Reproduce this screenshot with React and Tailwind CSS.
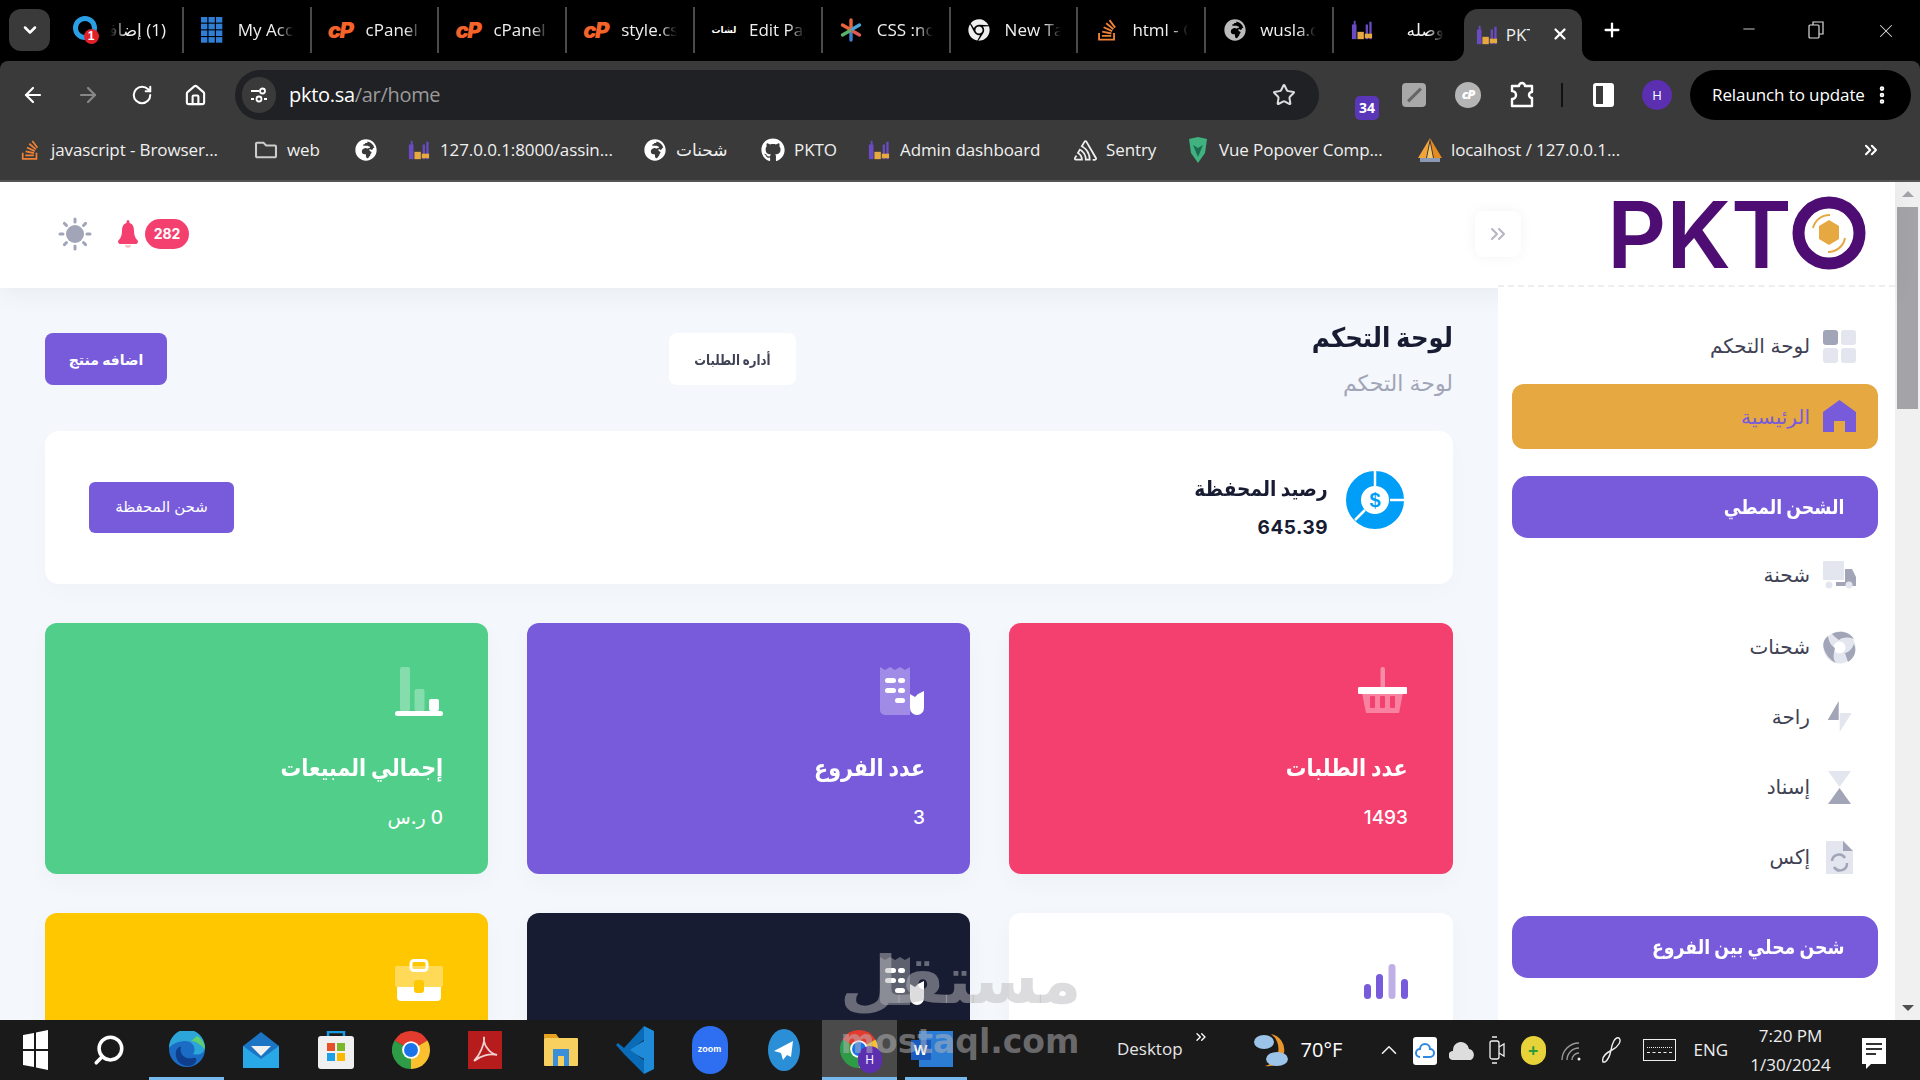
import React from 'react';
import { FaGithub, FaChrome, FaGlobeAfrica, FaStackOverflow, FaRegFolder } from 'react-icons/fa';
import { SiSentry } from 'react-icons/si';
import { ArrowLeft, ArrowRight, RotateCw, Home, Star, X, Plus, Minus, ChevronDown, ChevronsRight, ChevronUp, Search, EllipsisVertical } from 'lucide-react';

const ui = "font-['Open_Sans','Noto_Sans','DejaVu_Sans',sans-serif]";
const ar = "font-['Inter','DejaVu_Sans',sans-serif]";

const Fav = ({ s = 22 }) => (
  <svg width={s} height={s} viewBox="0 0 24 24"><rect x="1" y="6" width="5" height="16" fill="#6a4bc4"/><rect x="3" y="2" width="2" height="5" fill="#6a4bc4"/><rect x="7" y="14" width="7" height="8" fill="#e6a840"/><rect x="16" y="6" width="2.5" height="16" fill="#6a4bc4"/><rect x="20" y="3" width="2.5" height="19" fill="#6a4bc4"/><rect x="15" y="16" width="8" height="5" fill="#e6a840"/></svg>
);
const ChromeIcon = ({ s = 36 }) => (
  <svg width={s} height={s} viewBox="0 0 24 24"><path d="M12 12L1.6 6A12 12 0 0 1 22.39 6Z" fill="#e33b2e"/><path d="M12 12L22.39 6A12 12 0 0 1 12 24Z" fill="#fbc02d"/><path d="M12 12L12 24A12 12 0 0 1 1.6 6Z" fill="#2e9b47"/><circle cx="12" cy="12" r="5.6" fill="#fff"/><circle cx="12" cy="12" r="4.4" fill="#1a73e8"/></svg>
);
const Star6 = () => (
  <svg width="24" height="24" viewBox="0 0 24 24" strokeWidth="3.4" strokeLinecap="round"><path d="M12 2V10" stroke="#e8643c"/><path d="M12 14V22" stroke="#3f7fd0"/><path d="M3.5 7L10.5 11" stroke="#e8643c"/><path d="M13.5 13L20.5 17" stroke="#e05a50"/><path d="M20.5 7L13.5 11" stroke="#4aa3d8"/><path d="M10.5 13L3.5 17" stroke="#5bb36a"/></svg>
);
const Counter = () => (
  <div className="relative w-[24px] h-[28px]">
    <svg width="24" height="28" viewBox="0 0 24 28"><circle cx="12" cy="12" r="9.5" fill="none" stroke="#2a9fe6" strokeWidth="5"/></svg>
    <span className="absolute right-[-2px] bottom-0 w-[15px] h-[15px] rounded-full bg-[#e2202c] text-white text-[12px] font-bold leading-[15px] text-center font-['Liberation_Sans']">1</span>
  </div>
);
const Grid3 = () => (
  <svg width="22" height="26" viewBox="0 0 22 26" fill="#2f7fd6">{[0,1,2].flatMap(c=>[0,1,2,3].map(r=><rect key={c+'-'+r} x={c*7.5} y={r*6.7} width="6.3" height="5.6"/>))}</svg>
);
const CP = () => (
  <span className="w-[28px] text-center text-[#f4632a] text-[22px] leading-none italic font-black tracking-[-1.5px] font-['Inter',sans-serif]">cP</span>
);
const TinyAr = () => <span className={`text-[9px] font-bold text-white w-[24px] text-center ${ar}`}>لشات</span>;

const tabs = [
  { icon: <Counter/>, label: '(1) إضافة', rtl: true },
  { icon: <Grid3/>, label: 'My Account' },
  { icon: <CP/>, label: 'cPanel - Main' },
  { icon: <CP/>, label: 'cPanel - Main' },
  { icon: <CP/>, label: 'style.css - x' },
  { icon: <TinyAr/>, label: 'Edit Page' },
  { icon: <Star6/>, label: 'CSS :not()' },
  { icon: <FaChrome size={22} color="#eee"/>, label: 'New Tab' },
  { icon: <FaStackOverflow size={24} color="#ef8236"/>, label: 'html - Cs' },
  { icon: <FaGlobeAfrica size={22} color="#bbb"/>, label: 'wusla.com' },
  { icon: <Fav/>, label: 'وصله', ar: true },
];

const Tab = ({ t }) => (
  <div className="w-[127.8px] h-[46px] shrink-0 flex items-center border-r-2 border-[#4a4a4a] last:border-transparent">
    <span className="w-[54px] shrink-0 flex justify-center pl-[3px]">{t.icon}</span>
    {t.rtl ? (
      <span dir="rtl" className="w-[56px] overflow-hidden whitespace-nowrap text-[17px] text-[#f0f0f0] [mask-image:linear-gradient(to_left,black_70%,transparent)]">{t.label}</span>
    ) : (
      <span className={`w-[56px] overflow-hidden whitespace-nowrap text-[17px] text-[#f0f0f0] ${t.ar ? 'text-right' : ''} [mask-image:linear-gradient(to_right,black_70%,transparent)]`}>{t.label}</span>
    )}
  </div>
);

const TabStrip = () => (
  <div className={`h-[61px] bg-black flex items-start shrink-0 ${ui}`}>
    <div className="ml-[9px] mt-[9px] w-[41px] h-[42px] rounded-[12px] bg-[#3a3a3a] flex items-center justify-center"><ChevronDown size={20} color="#fff" strokeWidth={3}/></div>
    <div className="ml-[6px] mt-[7px] flex">
      {tabs.map((t, i) => <Tab key={i} t={t}/>)}
    </div>
    <div className="relative mt-[9px] ml-[2px] w-[118px] h-[52px] bg-[#3a3a3a] rounded-t-[14px] flex items-center shrink-0">
      <svg className="absolute left-[-12px] bottom-0" width="12" height="12"><path d="M12 0V12H0A12 12 0 0 0 12 0Z" fill="#3a3a3a"/></svg>
      <svg className="absolute right-[-12px] bottom-0" width="12" height="12"><path d="M0 0V12H12A12 12 0 0 1 0 0Z" fill="#3a3a3a"/></svg>
      <span className="ml-[12px]"><Fav/></span>
      <span className="ml-[8px] text-[17px] text-[#eee] w-[24px] overflow-hidden whitespace-nowrap">PKTO</span>
      <X size={18} color="#fff" strokeWidth={3} className="ml-[21px] mb-[2px] shrink-0"/>
    </div>
    <Plus size={22} color="#fff" strokeWidth={2.5} className="ml-[19px] mt-[19px]"/>
    <div className="ml-auto flex items-start pt-[20px]">
      <Minus size={18} color="#ddd" strokeWidth={1.2} className="mr-[50px]"/>
      <svg width="16" height="18" viewBox="0 0 16 18" fill="none" stroke="#ddd" strokeWidth="1.2" className="mr-[51px] mt-[1px]"><rect x="1" y="4" width="10" height="13" rx="1"/><path d="M5 4V1H15V13H11"/></svg>
      <X size={22} color="#ddd" strokeWidth={1.1} className="mr-[23px]"/>
    </div>
  </div>
);

const Toolbar = () => (
  <div className={`h-[60px] bg-[#3a3a3a] rounded-t-[8px] flex items-start shrink-0 pt-[9px] ${ui}`}>
    <div className="w-[235px] h-[50px] flex items-center shrink-0">
      <ArrowLeft size={24} color="#fff" strokeWidth={2.2} className="ml-[21px]"/>
      <ArrowRight size={24} color="#888" strokeWidth={2.2} className="ml-[31px]"/>
      <RotateCw size={22} color="#fff" strokeWidth={2.2} className="ml-[31px]"/>
      <Home size={23} color="#fff" strokeWidth={2.2} className="ml-[31px]"/>
    </div>
    <div className="w-[1084px] h-[50px] bg-[#202124] rounded-full flex items-center shrink-0">
      <span className="w-[34px] h-[36px] rounded-full bg-[#3a3a3a] flex items-center justify-center ml-[7px]">
        <svg width="18" height="18" viewBox="0 0 18 18" fill="none" stroke="#fff" strokeWidth="1.8"><path d="M1 5H9M1 13H4M14 13H17"/><circle cx="12.500" cy="5" r="2.500"/><circle cx="9" cy="13" r="2.500"/></svg>
      </span>
      <span className="ml-[13px] text-[20px] tracking-[-0.3px] text-white">pkto.sa<span className="text-[#9a9a9a]">/ar/home</span></span>
      <Star size={24} color="#ddd" strokeWidth={2} className="ml-auto mr-[23px]"/>
    </div>
    <div className="flex-1 h-[50px] flex items-center relative">
      <div className="absolute left-[36px] top-[26px] w-[24px] h-[24px] rounded-[5px] bg-[#5a37b8] text-white text-[14px] font-bold text-center leading-[24px]">34</div>
      <div className="ml-[83px] w-[24px] h-[24px] rounded-[4px] bg-[#a8a8a8] flex items-center justify-center"><span className="w-[3px] h-[18px] bg-[#666] rotate-45"></span></div>
      <div className="ml-[29px] w-[26px] h-[26px] rounded-full bg-[#b5b5b5] flex items-center justify-center text-white text-[13px] italic font-black tracking-[-1px]">cP</div>
      <svg width="26" height="28" viewBox="0 0 26 28" fill="none" stroke="#fff" strokeWidth="2.4" strokeLinejoin="round" className="ml-[28px]"><path d="M3 5H10A3 3 0 0 1 16 5H23V11A3 3 0 0 0 23 17V25H3V18A4 4 0 0 0 3 10Z"/></svg>
      <div className="ml-[26px] w-[2px] h-[24px] bg-[#111]"></div>
      <div className="ml-[30px] w-[21px] h-[24px] border-[3px] border-white rounded-[3px] flex justify-end"><span className="w-[8px] h-full bg-white"></span></div>
      <div className="ml-[28px] w-[30px] h-[30px] rounded-full bg-[#5b2fb0] text-white text-[13px] text-center leading-[30px]">H</div>
      <div className="ml-[18px] w-[221px] h-[50px] rounded-full bg-black flex items-center pl-[22px]">
        <span className="text-[17px] text-white whitespace-nowrap tracking-[-0.1px]">Relaunch to update</span>
        <EllipsisVertical size={22} color="#fff" strokeWidth={3} className="ml-[6px] shrink-0"/>
      </div>
    </div>
  </div>
);

const bookmarks = [
  { w: 236, icon: <FaStackOverflow size={22} color="#ef8236"/>, label: 'javascript - Browser...' },
  { w: 100, icon: <FaRegFolder size={22} color="#ccc"/>, label: 'web' },
  { w: 53, icon: <FaGlobeAfrica size={22} color="#fff"/> },
  { w: 236, icon: <Fav/>, label: '127.0.0.1:8000/assin...' },
  { w: 118, icon: <FaGlobeAfrica size={22} color="#fff"/>, label: 'شحنات' },
  { w: 106, icon: <FaGithub size={24} color="#fff"/>, label: 'PKTO' },
  { w: 206, icon: <Fav/>, label: 'Admin dashboard' },
  { w: 113, icon: <SiSentry size={23} color="#eee"/>, label: 'Sentry' },
  { w: 232, icon: <svg width="20" height="26" viewBox="0 0 20 26"><path d="M1 2L10 0L19 2L17 16L10 26L3 16Z" fill="#3fb27f"/><path d="M5 8L10 11L15 8L10 20Z" fill="#1c6b52"/></svg>, label: 'Vue Popover Comp...' },
  { w: 230, icon: <svg width="24" height="26" viewBox="0 0 24 26"><path d="M12 1L0 21H8Z" fill="#f2a33a"/><path d="M12 1L24 21H16Z" fill="#e58a1f"/><path d="M12 6L9 21H15Z" fill="#f7c56a"/><rect x="2" y="21" width="20" height="4" fill="#8a9ab5"/></svg>, label: 'localhost / 127.0.0.1...' },
];

const Bookmarks = () => (
  <div className={`h-[61px] bg-[#3a3a3a] flex items-start pt-[13px] pl-[18px] shrink-0 border-b-[2px] border-[#555] ${ui}`}>
    {bookmarks.map((b, i) => (
      <div key={i} style={{ width: b.w }} className="h-[32px] flex items-center shrink-0 whitespace-nowrap text-[17px] tracking-[-0.1px] text-[#f0f0f0]">
        <span className="w-[24px] flex justify-center shrink-0">{b.icon}</span>
        {b.label && <span className="ml-[9px]">{b.label}</span>}
      </div>
    ))}
    <ChevronsRight size={20} color="#fff" strokeWidth={2.5} className="ml-auto mr-[39px] mt-[6px]"/>
  </div>
);

const D = '#a1a5b7', L = '#e4e6ef';
const IconGrid = () => (<svg width="33" height="33" viewBox="0 0 33 33"><rect width="15" height="15" rx="3" fill={D}/><rect x="18" width="15" height="15" rx="3" fill={L}/><rect y="18" width="15" height="15" rx="3" fill={L}/><rect x="18" y="18" width="15" height="15" rx="3" fill={L}/></svg>);
const IconHome = () => (<svg width="33" height="33" viewBox="0 0 33 33"><path d="M16.5 0L33 12V32H22V21H11V32H0V12Z" fill="#785bdb"/></svg>);
const IconTruck = () => (<svg width="33" height="28" viewBox="0 0 33 28"><rect width="21" height="19" rx="1" fill={L}/><path d="M22 8H29L33 16V25H13V21H22Z" fill={D}/><circle cx="6" cy="24" r="3.5" fill={L}/><circle cx="26" cy="24" r="3.5" fill={L}/></svg>);
const IconSwirl = () => (<svg width="33" height="33" viewBox="0 0 33 33"><circle cx="16.5" cy="16.5" r="11" fill="none" stroke={L} strokeWidth="10"/><path d="M9 3C16 -1 26 0 31 8C25 6 20 6 16 9C13 7 11 5 9 3Z" fill={D}/><path d="M1 18C-1 13 1 8 5 5C6 12 9 15 12 17C11 22 9 27 13 32C7 29 3 24 1 18Z" fill={D}/><path d="M22 22C26 21 29 18 31 13C34 19 32 27 25 31C24 28 23 25 22 22Z" fill={D}/></svg>);
const IconBolt = () => (<svg width="33" height="33" viewBox="0 0 33 33"><path d="M4.700 19L15.700 0V19Z" fill={D}/><path d="M16.700 12H28.700L16.700 31Z" fill={L}/></svg>);
const IconGlass = () => (<svg width="33" height="33" viewBox="0 0 33 33"><path d="M5 0H28L16.5 16Z" fill={L}/><path d="M16.5 17L28 33H5Z" fill={D}/></svg>);
const IconFile = () => (<svg width="27" height="33" viewBox="0 0 27 33" fill="none"><path d="M0 0H18L27 10V33H0Z" fill={L}/><path d="M17 0L27 10H17Z" fill={D}/><path d="M6 20A7 7 0 0 1 19 17M21 22A7 7 0 0 1 8 26" stroke={D} strokeWidth="2.5"/></svg>);

const NavItem = ({ icon, label }) => (
  <div className="h-[70px] flex items-center justify-end pr-[39px] shrink-0">
    <span className={`text-[20px] text-[#3f4254] whitespace-nowrap ${ar}`}>{label}</span>
    <span className="w-[33px] ml-[13px] flex justify-center">{icon}</span>
  </div>
);
const PurpleBtn = ({ h, children }) => (
  <div style={{ height: h }} className={`ml-[14px] mr-[17px] pr-[34px] rounded-[16px] bg-[#785bdb] flex items-center justify-end shrink-0 text-white font-bold text-[20px] ${ar}`}>
    <span className="inline-block origin-right scale-x-[0.865] whitespace-nowrap">{children}</span>
  </div>
);

const Sidebar = () => (
  <div className="w-[397px] shrink-0 bg-white flex flex-col pt-[23px] relative z-20">
    <NavItem icon={<IconGrid/>} label="لوحة التحكم"/>
    <div className="mt-[3px] ml-[14px] mr-[17px] h-[65px] rounded-[12px] bg-[#e6a840] flex items-center justify-end pr-[22px] shrink-0">
      <span className={`text-[20px] text-[#785bdb] ${ar}`}>الرئيسية</span>
      <span className="w-[33px] ml-[13px]"><IconHome/></span>
    </div>
    <div className="mt-[27px]"><PurpleBtn h={62}>الشحن المطي</PurpleBtn></div>
    <div className="mt-[2px]">
      <NavItem icon={<IconTruck/>} label="شحنة"/>
    </div>
    <div className="mt-[2px]"><NavItem icon={<IconSwirl/>} label="شحنات"/></div>
    <NavItem icon={<IconBolt/>} label="راحة"/>
    <NavItem icon={<IconGlass/>} label="إسناد"/>
    <NavItem icon={<IconFile/>} label="إكس"/>
    <div className="mt-[24px]"><PurpleBtn h={62}>شحن محلي بين الفروع</PurpleBtn></div>
  </div>
);

const Basket = () => (<svg width="50" height="47" viewBox="0 0 50 47"><path d="M4 26H45L41 46H8Z" fill="#fff" fillOpacity=".35"/><g fill="#f4406e"><rect x="12" y="29" width="5" height="12" rx="1"/><rect x="22" y="29" width="5" height="12" rx="1"/><rect x="32" y="29" width="5" height="12" rx="1"/></g><rect y="20" width="49" height="7" rx="1" fill="#fff"/><rect x="22.5" width="4.5" height="24" rx="2" fill="#fff" fillOpacity=".4"/></svg>);
const Receipt = () => (<svg width="45" height="48" viewBox="0 0 45 48"><path d="M0 0L5 3L10 0L15 3L20 0L25 3L30 0V48H5A5 5 0 0 1 0 43Z" fill="#fff" fillOpacity=".3"/><g fill="#fff"><rect x="5" y="11" width="11" height="5" rx="2.5"/><rect x="18" y="11" width="7" height="5" rx="2.5"/><rect x="5" y="21" width="11" height="5" rx="2.5"/><rect x="18" y="21" width="7" height="5" rx="2.5"/><rect x="15" y="31" width="10" height="5" rx="2.5"/><path d="M30 27L35 30L38 27L44 24V41A7 7 0 0 1 30 41Z"/></g></svg>);
const Chart = () => (<svg width="48" height="49" viewBox="0 0 48 49" fill="#fff"><rect x="5" width="10" height="44" rx="2" fillOpacity=".3"/><rect x="19.5" y="22" width="10" height="22" rx="2" fillOpacity=".3"/><rect x="34" y="32" width="10" height="12" rx="2"/><rect y="44" width="48" height="5" rx="2.5"/></svg>);
const Bars = () => (<svg width="44" height="35" viewBox="0 0 44 35"><rect y="20" width="7" height="15" rx="3.5" fill="#785bdb"/><rect x="12" y="10" width="7" height="25" rx="3.5" fill="#785bdb"/><rect x="24.5" width="7" height="35" rx="3.5" fill="#c0aee6"/><rect x="37" y="15" width="7" height="20" rx="3.5" fill="#785bdb"/></svg>);
const Case = () => (<svg width="48" height="42" viewBox="0 0 48 42"><rect x="16" y="1.5" width="16" height="10" rx="3" fill="none" stroke="#fff" strokeWidth="3"/><rect y="7" width="48" height="21" rx="2" fill="#fff" fillOpacity=".35"/><path d="M2 28H46V38A4 4 0 0 1 42 42H6A4 4 0 0 1 2 38Z" fill="#fff"/><rect x="19" y="21" width="10" height="13" rx="3" fill="#ffc700"/></svg>);

const Card = ({ bg, icon, title, value, iconTop = 44 }) => (
  <div dir="rtl" className={`h-[251px] rounded-[12px] px-[45px] shadow-[0_8px_24px_rgba(0,0,0,0.03)] ${bg} ${ar}`}>
    <div style={{ paddingTop: iconTop }} className="flex justify-start h-[125px]">{icon}</div>
    {title && <div className="h-[40px] leading-[40px] text-[24px] font-bold text-white"><span className="inline-block origin-right scale-x-[0.86] whitespace-nowrap">{title}</span></div>}
    {value && <div className="mt-[15px] h-[30px] leading-[30px] text-[19px] font-medium text-white">{value}</div>}
  </div>
);

const Main = () => (
  <div className={`flex-1 min-w-0 bg-[#f4f7fb] px-[45px] pt-[24px] ${ar}`}>
    <div className="h-[119px] flex items-start">
      <div className="mt-[21px] w-[122px] h-[52px] rounded-[8px] bg-[#785bdb] text-white text-[14px] font-bold flex items-center justify-center">اضافه منتج</div>
      <div className="mt-[21px] ml-[502px] w-[127px] h-[52px] rounded-[8px] bg-white text-[#3f4254] text-[14px] font-bold flex items-center justify-center"><span className="inline-block scale-x-[0.84] whitespace-nowrap">أداره الطلبات</span></div>
      <div className="ml-auto text-right">
        <div className="h-[52px] leading-[52px] text-[27px] font-bold text-[#181c32]"><span className="inline-block origin-right scale-x-[0.905] whitespace-nowrap">لوحة التحكم</span></div>
        <div className="h-[38px] leading-[38px] text-[22px] text-[#a1a5b7]">لوحة التحكم</div>
      </div>
    </div>
    <div className="h-[153px] rounded-[14px] bg-white flex items-center pl-[44px] pr-[49px] shadow-[0_8px_24px_rgba(0,0,0,0.02)]">
      <div className="w-[145px] h-[51px] rounded-[6px] bg-[#785bdb] text-white text-[15px] font-medium flex items-center justify-center mt-[-1px]">شحن المحفظة</div>
      <div className="ml-auto text-right mr-[18px] mt-[1px]">
        <div className="h-[36px] leading-[36px] text-[21px] font-bold text-[#181c32]"><span className="inline-block origin-right scale-x-[0.885] whitespace-nowrap">رصيد المحفظة</span></div>
        <div className="h-[36px] leading-[36px] mt-[3px] text-[19px] font-bold tracking-[0.5px] text-[#181c32]">645.39</div>
      </div>
      <div className="relative w-[58px] h-[58px] mt-[-16px]">
        <svg width="58" height="58" viewBox="0 0 58 58"><circle cx="29" cy="29" r="21.5" fill="none" stroke="#009ef7" strokeWidth="15"/><path d="M29 0V16M44 29H58M19 39L9 49" stroke="#fff" strokeWidth="2.5"/></svg>
        <span className="absolute inset-0 flex items-center justify-center text-[#009ef7] text-[20px] font-bold font-['Liberation_Sans']">$</span>
      </div>
    </div>
    <div className="mt-[39px] grid grid-cols-[443px_443px_444px] gap-[39px]">
      <Card bg="bg-[#51cf8a]" icon={<Chart/>} title="إجمالي المبيعات" value="0 ر.س"/>
      <Card bg="bg-[#785bdb]" icon={<Receipt/>} title="عدد الفروع" value="3"/>
      <Card bg="bg-[#f4406e]" icon={<Basket/>} title="عدد الطلبات" value="1493"/>
      <Card bg="bg-[#ffc700]" icon={<Case/>} iconTop={46}/>
      <Card bg="bg-[#181c32]" icon={<Receipt/>} />
      <Card bg="bg-white" icon={<Bars/>} iconTop={51}/>
    </div>
  </div>
);

const Header = () => (
  <div className="h-[106px] bg-white flex shrink-0 relative z-10 shadow-[0_6px_24px_rgba(0,0,0,0.05)]">
    <div className="flex-1 flex items-center pb-[2px]">
      <svg width="34" height="34" viewBox="0 0 34 34" className="ml-[58px]"><circle cx="17" cy="17" r="9" fill={D}/><g stroke={D} strokeWidth="3" strokeLinecap="round"><path d="M17 2V5M17 29V32M2 17H5M29 17H32M6.4 6.4L8.5 8.5M25.5 25.5L27.6 27.6M27.6 6.4L25.5 8.5M8.5 25.5L6.4 27.6"/></g></svg>
      <svg width="20" height="28" viewBox="0 0 20 28" className="ml-[26px]"><path d="M10 0C11 0 11.500 1 11.500 3C15 4 16 7 16 11C16 16 18 19 20 21C20 23 19 24 18 24H2C1 24 0 23 0 21C2 19 4 16 4 11C4 7 5 4 8.500 3C8.500 1 9 0 10 0Z" fill="#f4406e"/><path d="M7 25H13A3 3 0 0 1 7 25Z" fill="#f6c6c6"/></svg>
      <div className={`ml-[7px] w-[44px] h-[30px] rounded-full bg-[#f4406e] text-white text-[14px] font-bold text-center leading-[30px] ${ar}`}>282</div>
      <div className="ml-auto mr-[-23px] relative z-10 w-[46px] h-[46px] rounded-[8px] bg-white shadow-[0_0_14px_rgba(0,0,0,0.05)] flex items-center justify-center"><ChevronsRight size={24} color="#b5b5c3" strokeWidth={2}/></div>
    </div>
    <div className="w-[397px] h-[105px] border-b-2 border-dashed border-[#eee] flex items-center pl-[109px]">
      <span className="text-[92px] font-['Inter',sans-serif] font-semibold text-[#4e0d72] leading-none tracking-[0px] mt-[3px]">PKT</span>
      <svg width="74" height="74" viewBox="0 0 74 74" className="ml-[0px] mt-[-1px]"><circle cx="37" cy="37" r="30.500" fill="none" stroke="#4e0d72" strokeWidth="12"/><path d="M37 24L47 30V43L37 49L27 43V30Z" fill="#e6a840"/><path d="M21 32A17 17 0 0 1 38 19M53 42A17 17 0 0 1 36 56" fill="none" stroke="#e6a840" strokeWidth="2"/></svg>
    </div>
  </div>
);

const Scrollbar = () => (
  <div className="w-[25px] shrink-0 bg-[#f0f0f0] flex flex-col items-center pt-[9px]">
    <div className="w-0 h-0 border-x-[6px] border-x-transparent border-b-[6px] border-b-[#a3a3a8]"></div>
    <div className="mt-[10px] w-[21px] h-[202px] bg-[#a3a3a8]"></div>
    <div className="mt-auto mb-[9px] w-0 h-0 border-x-[6px] border-x-transparent border-t-[6px] border-t-[#505050]"></div>
  </div>
);

const MailIcon = () => (<svg width="36" height="36" viewBox="0 0 36 36"><path d="M0 14L18 0L36 14V36H0Z" fill="#1b74c4"/><path d="M8 14H28L18 24Z" fill="#f0f0f0"/><path d="M0 14L18 27L36 14V36H0Z" fill="#29a8e8"/></svg>);
const Store = () => (<svg width="36" height="38" viewBox="0 0 36 38"><path d="M10 6V1H26V6" fill="none" stroke="#1b9ae0" strokeWidth="2.500"/><rect y="5" width="36" height="33" rx="3" fill="#f0f0f0"/><rect x="9" y="12" width="8" height="8" fill="#e8502a"/><rect x="19" y="12" width="8" height="8" fill="#7cb82a"/><rect x="9" y="22" width="8" height="8" fill="#1ba1e8"/><rect x="19" y="22" width="8" height="8" fill="#fab800"/></svg>);
const Edge = () => (<svg width="36" height="36" viewBox="0 0 36 36"><circle cx="18" cy="18" r="18" fill="#1b6cc4"/><path d="M0 17A18 18 0 0 1 36 16C36 22 30 25 24 23C28 18 24 9 15 10C7 11 2 14 0 17Z" fill="#2ca6d8"/><path d="M22 10C28 10 33 15 36 18C36 14 34 8 28 5Z" fill="#5fcf70"/><path d="M12 16C10 22 15 29 24 27C29 26 28 31 24 34C14 38 5 30 7 20C8 17 11 15 12 16Z" fill="#0f3f8c"/></svg>);
const Pdf = () => (<svg width="34" height="38" viewBox="0 0 34 38"><rect width="34" height="38" fill="#b71c1c"/><path d="M6 30C12 24 17 12 16 6C15 12 20 22 29 24C22 22 12 25 6 30Z" fill="none" stroke="#f0d0d0" strokeWidth="1.8"/></svg>);
const Folder = () => (<svg width="36" height="32" viewBox="0 0 36 32"><path d="M2 0H14L17 4H2Z" fill="#e8a020"/><rect x="2" y="4" width="34" height="28" rx="1" fill="#f8d060"/><rect x="11" y="15" width="16" height="17" fill="#3a8fd8"/><rect x="16" y="22" width="6" height="10" fill="#f8d060"/></svg>);
const VS = () => (<svg width="38" height="48" viewBox="0 0 38 48"><path d="M28 0L38 5V43L28 48L28 33L12 24L28 15Z" fill="#1f8ad8"/><path d="M28 0L8 22L2 17L0 19L8 28L28 48V34L14 24L28 14Z" fill="#0a6cb8"/></svg>);
const Zoom = () => (<div className="w-[36px] h-[48px] rounded-full bg-[#2d6ff0] flex items-center justify-center text-white text-[9px] font-bold font-['Liberation_Sans']">zoom</div>);
const Tele = () => (<svg width="32" height="42" viewBox="0 0 32 42"><ellipse cx="16" cy="21" rx="16" ry="21" fill="#2a8fd6"/><path d="M25 12L6 22L13 24L15 31L19 26L23 28Z" fill="#fff"/></svg>);
const Win = () => (<svg width="25" height="44" viewBox="0 0 25 44" fill="#fff" className="mr-[3px]"><path d="M0 7L11 5V21H0Z"/><path d="M13 4.500L25 2V21H13Z"/><path d="M0 23H11V39L0 37Z"/><path d="M13 23H25V42L13 39.500Z"/></svg>);

const appIcons = [<Win/>, <Search size={34} color="#fff" strokeWidth={2.5} className="-scale-x-100 mr-[6px]"/>, <Edge/>, <MailIcon/>, <Store/>, <ChromeIcon s={38}/>, <Pdf/>, <Folder/>, <VS/>, <Zoom/>, <Tele/>];

const Taskbar = () => (
  <div className={`h-[60px] bg-[#1a1a1a] flex shrink-0 relative ${ui}`}>
    {appIcons.map((ic, i) => (
      <div key={i} className={`w-[74.7px] h-full shrink-0 flex items-center justify-center ${i === 2 ? 'border-b-[3px] border-[#76b9ed]' : ''}`}>{ic}</div>
    ))}
    <div className="w-[75px] h-full bg-[#4a4a4a] shrink-0 relative flex items-center justify-center border-b-[3px] border-[#76b9ed]">
      <ChromeIcon s={38}/>
      <span className="absolute left-[36px] top-[26px] w-[24px] h-[27px] rounded-full bg-[#5b2fb0] text-white text-[12px] text-center leading-[27px]">H</span>
    </div>
    <div className="w-[62px] h-full shrink-0 ml-[8px] flex items-center justify-center border-b-[3px] border-[#76b9ed]">
      <div className="w-[34px] h-[36px] bg-[#2b7cd3] relative"><span className="absolute left-[-8px] top-[9px] w-[20px] h-[20px] bg-[#185abd] text-white text-[14px] font-bold text-center leading-[20px]">W</span></div>
    </div>
    <div className="w-[216px] shrink-0 text-[17px] text-[#e6e6e6] flex items-center justify-end">
      <span className="mt-[-2px]">Desktop</span>
    </div>
    <ChevronsRight size={16} color="#fff" className="ml-[10px] mt-[9px]"/>
    <div className="ml-[40px] w-[44px] h-full flex items-center justify-center shrink-0">
      <svg width="36" height="36" viewBox="0 0 36 36"><path d="M18 2A16 16 0 0 1 12 34A18 18 0 0 0 18 2Z" fill="#e8952a"/><ellipse cx="11" cy="10" rx="10" ry="7" fill="#9cc4e8"/><ellipse cx="24" cy="27" rx="11" ry="7" fill="#9cc4e8"/></svg>
    </div>
    <span className="ml-[8px] w-[66px] text-[20px] text-white leading-[60px] shrink-0">70°F</span>
    <ChevronUp size={26} color="#eee" strokeWidth={1.5} className="ml-[9px] mt-[17px] shrink-0"/>
    <div className="ml-[11px] mt-[17px] w-[24px] h-[28px] rounded-[3px] bg-white flex items-center justify-center shrink-0"><svg width="20" height="16" viewBox="0 0 20 16"><path d="M5 14A4 4 0 0 1 5 6A5 5 0 0 1 15 6A4 4 0 0 1 15 14H8" fill="none" stroke="#2f88e0" strokeWidth="2"/></svg></div>
    <svg width="26" height="20" viewBox="0 0 26 20" className="ml-[12px] mt-[21px] shrink-0"><path d="M4 19A4 4 0 0 1 4 10A8 8 0 0 1 20 8A6 6 0 0 1 22 19Z" fill="#ddd"/></svg>
    <svg width="16" height="30" viewBox="0 0 16 30" fill="none" stroke="#eee" strokeWidth="1.3" className="ml-[14px] mt-[15px] shrink-0"><rect x="1" y="6" width="9" height="18" rx="2"/><path d="M10 12L15 9V21L10 18M3 2H8M3 28H8"/></svg>
    <div className="ml-[16px] mt-[16px] w-[25px] h-[29px] rounded-full bg-[#e8d23a] flex items-center justify-center text-[#2a9a3a] text-[18px] font-bold shrink-0">+</div>
    <svg width="24" height="22" viewBox="0 0 24 22" fill="none" stroke="#999" strokeWidth="1.4" className="ml-[14px] mt-[20px] shrink-0"><path d="M2 20A17 17 0 0 1 19 3M7 20A12 12 0 0 1 19 8M12 20A7 7 0 0 1 19 13"/><circle cx="19" cy="19" r="1.500" fill="#eee" stroke="none"/></svg>
    <svg width="24" height="28" viewBox="0 0 24 28" fill="none" stroke="#eee" strokeWidth="1.4" className="ml-[16px] mt-[16px] shrink-0"><path d="M3 26C1 20 8 16 12 14C18 11 22 5 19 2C15 0 12 8 11 14C10 19 8 24 5 26Z"/></svg>
    <div className="ml-[19px] mt-[19px] w-[33px] h-[22px] border border-[#eee] flex flex-col justify-center gap-[4px] px-[3px] shrink-0"><span className="h-[1px] border-t border-dotted border-[#eee]"></span><span className="h-[1px] border-t border-dashed border-[#eee]"></span></div>
    <span className="ml-[18px] w-[40px] text-[17px] text-[#eee] leading-[60px] shrink-0">ENG</span>
    <div className="ml-[13px] w-[88px] h-full flex flex-col items-center justify-center text-[17px] text-[#eee] leading-[29px] shrink-0 whitespace-nowrap">
      <span>7:20 PM</span><span>1/30/2024</span>
    </div>
    <div className="ml-[27px] mt-[18px] w-[24px] h-[26px] bg-white relative shrink-0">
      <span className="absolute left-[4px] right-[4px] top-[5px] h-[2px] bg-[#333]"></span>
      <span className="absolute left-[4px] right-[4px] top-[10px] h-[2px] bg-[#333]"></span>
      <span className="absolute left-[4px] right-[10px] top-[15px] h-[2px] bg-[#333]"></span>
      <span className="absolute left-[4px] bottom-[-5px] w-0 h-0 border-r-[6px] border-r-transparent border-t-[6px] border-t-white"></span>
    </div>
  </div>
);

export default function App() {
  return (
    <div className={`relative w-[1920px] h-[1080px] overflow-hidden flex flex-col bg-black ${ui}`}>
      <TabStrip/>
      <Toolbar/>
      <Bookmarks/>
      <div className="flex-1 min-h-0 flex overflow-hidden">
        <div className="flex-1 min-w-0 flex flex-col">
          <Header/>
          <div className="flex-1 min-h-0 flex overflow-hidden">
            <Main/>
            <Sidebar/>
          </div>
        </div>
        <Scrollbar/>
      </div>
      <Taskbar/>
      <div className="absolute left-[840px] top-[935px] w-[240px] h-[125px] z-30 pointer-events-none text-center text-[#b9b9be]/50 font-['Inter','DejaVu_Sans',sans-serif] font-bold">
        <div className="h-[88px] leading-[88px] text-[66px] whitespace-nowrap">مستقل</div>
        <div className="h-[37px] leading-[37px] text-[33px] whitespace-nowrap font-['DejaVu_Sans',sans-serif]">mostaql.com</div>
      </div>
    </div>
  );
}
